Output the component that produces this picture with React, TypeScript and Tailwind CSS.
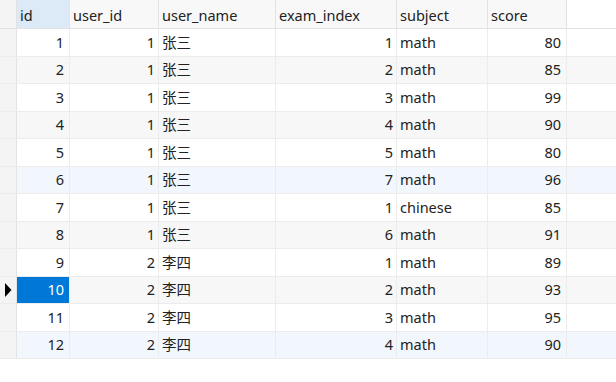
import React from "react";

const rows: [number, number, string, number, string, number][] = [
  [1, 1, "张三", 1, "math", 80],
  [2, 1, "张三", 2, "math", 85],
  [3, 1, "张三", 3, "math", 99],
  [4, 1, "张三", 4, "math", 90],
  [5, 1, "张三", 5, "math", 80],
  [6, 1, "张三", 7, "math", 96],
  [7, 1, "张三", 1, "chinese", 85],
  [8, 1, "张三", 6, "math", 91],
  [9, 2, "李四", 1, "math", 89],
  [10, 2, "李四", 2, "math", 93],
  [11, 2, "李四", 3, "math", 95],
  [12, 2, "李四", 4, "math", 90],
];

const font = { fontFamily: '"Segoe UI", "Noto Sans", "Noto Sans CJK SC", sans-serif' };

export default function App() {
  return (
    <div className="w-[616px] h-[382px] bg-white text-[14.5px] text-[#222]" style={font}>
      <div className="flex h-[29px] border-b border-[#e3e3e3]">
        <div className="w-[17px] bg-[#f4f4f4] border-r border-[#e3e3e3]" />
        <div className="w-[53px] bg-[#dce9f7] border-r border-[#e3e3e3] pl-[3px] pt-[3px] flex items-center">id</div>
        <div className="w-[89px] bg-[#f8f8f8] border-r border-[#e3e3e3] pl-[3px] pt-[3px] flex items-center">user_id</div>
        <div className="w-[117px] bg-[#f8f8f8] border-r border-[#e3e3e3] pl-[3px] pt-[3px] flex items-center">user_name</div>
        <div className="w-[121px] bg-[#f8f8f8] border-r border-[#e3e3e3] pl-[3px] pt-[3px] flex items-center">exam_index</div>
        <div className="w-[91px] bg-[#f8f8f8] border-r border-[#e3e3e3] pl-[3px] pt-[3px] flex items-center">subject</div>
        <div className="w-[79px] bg-[#f8f8f8] border-r border-[#e3e3e3] pl-[3px] pt-[3px] flex items-center">score</div>
      </div>
      {rows.map((r, i) => {
        const sel = r[0] === 10;
        const bg = r[0] === 6 || r[0] === 12 ? "bg-[#f2f7fd]" : i % 2 === 0 ? "bg-white" : "bg-[#f7f7f7]";
        return (
          <div key={i} className={`flex h-[27.5px] border-b border-[#ececec] ${bg}`}>
            <div className="w-[17px] bg-[#f4f4f4] border-r border-[#e3e3e3] flex items-center justify-center">
              {sel && (
                <svg width="8" height="14" viewBox="0 0 8 14">
                  <path d="M1 0 L7.5 7 L1 14 Z" fill="#000" />
                </svg>
              )}
            </div>
            <div className={`w-[53px] border-r border-[#ececec] pr-[5px] pt-[1px] flex items-center justify-end ${sel ? "bg-[#0078d7] text-white" : ""}`}>{r[0]}</div>
            <div className="w-[89px] border-r border-[#ececec] pr-[3px] pt-[1px] flex items-center justify-end">{r[1]}</div>
            <div className="w-[117px] border-r border-[#ececec] pl-[3px] pt-[1px] flex items-center">{r[2]}</div>
            <div className="w-[121px] border-r border-[#ececec] pr-[3px] pt-[1px] flex items-center justify-end">{r[3]}</div>
            <div className="w-[91px] border-r border-[#ececec] pl-[3px] pt-[1px] flex items-center">{r[4]}</div>
            <div className="w-[79px] border-r border-[#ececec] pr-[5px] pt-[1px] flex items-center justify-end">{r[5]}</div>
          </div>
        );
      })}
    </div>
  );
}
